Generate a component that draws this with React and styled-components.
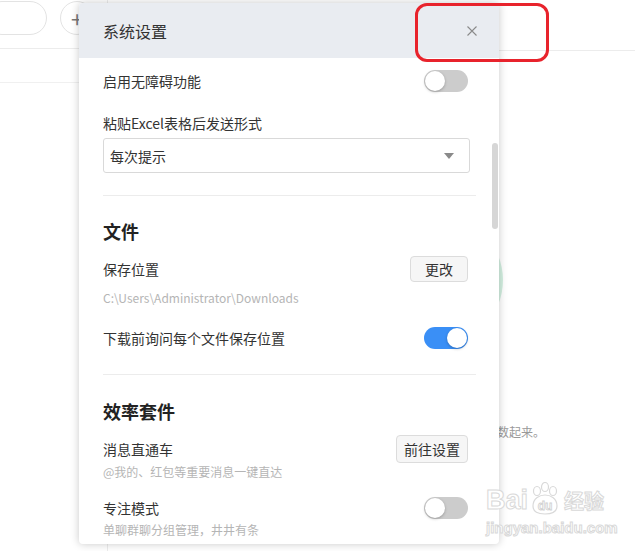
import styled, { createGlobalStyle } from "styled-components";

const GlobalStyle = createGlobalStyle`
  html, body {
    margin: 0;
    padding: 0;
    background: #fff;
    overflow: hidden;
  }
  body {
    font-family: "Noto Sans CJK SC", "Noto Sans", sans-serif;
    color: #333;
  }
  * { box-sizing: border-box; }
`;

const Page = styled.div`
  position: relative;
  width: 635px;
  height: 551px;
  display: flex;
  overflow: hidden;
  background: #fff;
`;

/* ---------- background app ---------- */
const Sidebar = styled.div`
  width: 108px;
  flex-shrink: 0;
  border-right: 1px solid #ececec;
  display: flex;
  flex-direction: column;
`;
const SearchBar = styled.div`
  height: 49px;
  border-bottom: 1px solid #ececec;
  display: flex;
  align-items: flex-start;
  gap: 13px;
  padding-top: 1px;
`;
const SearchPill = styled.div`
  width: 62px;
  height: 34px;
  margin-left: -15px;
  border: 1px solid #e3e3e3;
  border-radius: 17px;
`;
const PlusCircle = styled.div`
  width: 34px;
  height: 34px;
  border: 1px solid #e3e3e3;
  border-radius: 50%;
  display: flex;
  align-items: center;
  justify-content: center;
  color: #777;
  font-size: 22px;
  line-height: 1;
`;
const ListItem = styled.div`
  height: 34px;
  border-bottom: 1px solid #f0f0f0;
`;
const Main = styled.div`
  flex: 1;
  display: flex;
  flex-direction: column;
`;
const MainHeader = styled.div`
  height: 51px;
  border-bottom: 1px solid #ececec;
`;
const EmptyState = styled.div`
  display: flex;
  flex-direction: column;
  align-items: flex-end;
  padding-top: 164px;
`;
const EmptyCircle = styled.div`
  width: 130px;
  height: 130px;
  border-radius: 50%;
  background: #d3f0e1;
  margin-right: ${(p) => p.$right}px;
`;
const EmptyText = styled.div`
  margin-top: 78px;
  margin-right: ${(p) => p.$right}px;
  font-size: 12px;
  line-height: 18px;
  color: #999;
  white-space: nowrap;
`;

/* ---------- dialog ---------- */
const Dialog = styled.div`
  position: absolute;
  left: 79px;
  top: 3px;
  width: 420px;
  height: 541px;
  background: #fff;
  border-radius: 4px;
  box-shadow: 0 0 8px rgba(0, 0, 0, 0.22);
  display: flex;
  flex-direction: column;
  overflow: hidden;
`;
const DialogHeader = styled.div`
  height: 55px;
  flex-shrink: 0;
  background: #e9ecf1;
  display: flex;
  align-items: center;
  justify-content: space-between;
  padding: 0 22px 0 24px;
`;
const DialogTitle = styled.div`
  font-size: 16px;
  color: #333;
  line-height: 22px;
`;
const CloseButton = styled.button`
  border: none;
  background: none;
  padding: 0;
  width: 10px;
  height: 10px;
  display: flex;
  cursor: pointer;
`;
const DialogBody = styled.div`
  flex: 1;
  padding: 0 31px 0 24px;
  display: flex;
  flex-direction: column;
`;
const ScrollThumb = styled.div`
  position: absolute;
  right: 1px;
  top: 140px;
  width: 6px;
  height: 86px;
  border-radius: 3px;
  background: #d6d6d6;
`;
const Row = styled.div`
  display: flex;
  align-items: center;
  justify-content: space-between;
  height: ${(p) => p.$h}px;
  margin-top: ${(p) => p.$top}px;
  flex-shrink: 0;
`;
const Label = styled.div`
  font-size: 14px;
  line-height: 20px;
  color: #333;
  margin-top: ${(p) => p.$top || 0}px;
`;
const Desc = styled.div`
  font-size: 12px;
  line-height: 18px;
  color: #b5b5b5;
  margin-top: ${(p) => p.$top}px;
`;
const Heading = styled.div`
  font-size: 18px;
  font-weight: 700;
  line-height: 26px;
  color: #222;
  margin-top: ${(p) => p.$top}px;
`;
const Divider = styled.div`
  height: 1px;
  background: #ececec;
  margin-top: ${(p) => p.$top}px;
  margin-right: -8px;
  flex-shrink: 0;
`;
const Select = styled.div`
  height: 35px;
  margin-top: 5px;
  margin-right: -2px;
  border: 1px solid #d9d9d9;
  border-radius: 3px;
  display: flex;
  align-items: center;
  justify-content: space-between;
  padding: 0 15px 0 6px;
  font-size: 14px;
  color: #333;
  flex-shrink: 0;
`;
const Caret = styled.span`
  width: 0;
  height: 0;
  border-left: 5px solid transparent;
  border-right: 5px solid transparent;
  border-top: 6px solid #8a8a8a;
`;
const Button = styled.button`
  height: ${(p) => p.$h}px;
  padding: 0 ${(p) => p.$pad}px;
  border: 1px solid #dcdcdc;
  border-radius: 4px;
  background: #f6f6f6;
  font-family: inherit;
  font-size: 14px;
  color: #333;
  cursor: pointer;
`;
const Track = styled.div`
  width: 44px;
  height: 22px;
  border-radius: 11px;
  background: ${(p) => (p.$on ? "#3a8ff6" : "#cccccc")};
  display: flex;
  align-items: center;
  justify-content: ${(p) => (p.$on ? "flex-end" : "flex-start")};
  padding: 0 1px;
`;
const Knob = styled.div`
  width: 20px;
  height: 20px;
  border-radius: 50%;
  background: #fff;
  box-shadow: 0 1px 3px rgba(0, 0, 0, 0.25);
`;

/* ---------- overlays ---------- */
const Annotation = styled.div`
  position: absolute;
  left: 415px;
  top: 3px;
  width: 134px;
  height: 59px;
  border: 3px solid #e8232c;
  border-radius: 12px;
`;
const Watermark = styled.div`
  position: absolute;
  left: 486px;
  top: 482px;
  display: flex;
  flex-direction: column;
  color: #fff;
  -webkit-text-stroke: 1px #d9d9d9;
`;
const MarkTop = styled.div`
  display: flex;
  align-items: flex-end;
  font-family: "Liberation Sans", Arial, sans-serif;
  font-weight: 700;
  font-size: 27px;
  line-height: 32px;
`;
const MarkCn = styled.span`
  font-family: "Noto Sans CJK SC", sans-serif;
  font-size: 20px;
  line-height: 30px;
  margin-left: 2px;
`;
const MarkUrl = styled.div`
  font-family: "Liberation Sans", Arial, sans-serif;
  font-size: 15px;
  font-weight: 700;
  line-height: 18px;
  margin-top: 3px;
`;

const Toggle = ({ on }) => (
  <Track $on={on}>
    <Knob />
  </Track>
);

const Paw = () => (
  <svg width="34" height="34" viewBox="0 0 34 34" fill="#fff" stroke="#d9d9d9" strokeWidth="1.2">
    <ellipse cx="9" cy="9" rx="3.5" ry="4.5" />
    <ellipse cx="17" cy="5" rx="3.5" ry="4.5" />
    <ellipse cx="25" cy="9" rx="3.5" ry="4.5" />
    <path d="M5 24 C5 16 12 13 17 13 C22 13 29 16 29 24 C29 30 24 32 17 32 C10 32 5 30 5 24 Z" />
    <text x="17" y="28" textAnchor="middle" fontFamily="Liberation Sans, Arial" fontWeight="700" fontSize="12" fill="#fff" stroke="#d0d0d0" strokeWidth="0.8">du</text>
  </svg>
);

export default function App() {
  return (
    <>
      <GlobalStyle />
      <Page>
        <Sidebar>
          <SearchBar>
            <SearchPill />
            <PlusCircle>+</PlusCircle>
          </SearchBar>
          <ListItem />
        </Sidebar>
        <Main>
          <MainHeader />
          <EmptyState>
            <EmptyCircle $right={132} />
            <EmptyText $right={90}>让零散的知识数起来。</EmptyText>
          </EmptyState>
        </Main>

        <Dialog>
          <DialogHeader>
            <DialogTitle>系统设置</DialogTitle>
            <CloseButton aria-label="关闭">
              <svg width="10" height="10" viewBox="0 0 10 10" stroke="#8a8a8a" strokeWidth="1.1">
                <path d="M0.5 0.5 L9.5 9.5 M9.5 0.5 L0.5 9.5" />
              </svg>
            </CloseButton>
          </DialogHeader>
          <DialogBody>
            <Row $h={22} $top={12}>
              <Label>启用无障碍功能</Label>
              <Toggle on={false} />
            </Row>
            <Label $top={21}>粘贴Excel表格后发送形式</Label>
            <Select>
              <span>每次提示</span>
              <Caret />
            </Select>
            <Divider $top={22} />

            <Heading $top={22}>文件</Heading>
            <Row $h={26} $top={12}>
              <Label>保存位置</Label>
              <Button $h={26} $pad={14}>更改</Button>
            </Row>
            <Desc $top={7}>C:\Users\Administrator\Downloads</Desc>
            <Row $h={22} $top={20}>
              <Label>下载前询问每个文件保存位置</Label>
              <Toggle on />
            </Row>
            <Divider $top={25} />

            <Heading $top={23}>效率套件</Heading>
            <Row $h={28} $top={11}>
              <Label>消息直通车</Label>
              <Button $h={28} $pad={7}>前往设置</Button>
            </Row>
            <Desc $top={0}>@我的、红包等重要消息一键直达</Desc>
            <Row $h={22} $top={16}>
              <Label>专注模式</Label>
              <Toggle on={false} />
            </Row>
            <Desc $top={2}>单聊群聊分组管理，井井有条</Desc>
          </DialogBody>
          <ScrollThumb />
        </Dialog>

        <Annotation />
        <Watermark>
          <MarkTop>
            <span>Bai</span>
            <Paw />
            <MarkCn>经验</MarkCn>
          </MarkTop>
          <MarkUrl>jingyan.baidu.com</MarkUrl>
        </Watermark>
      </Page>
    </>
  );
}
